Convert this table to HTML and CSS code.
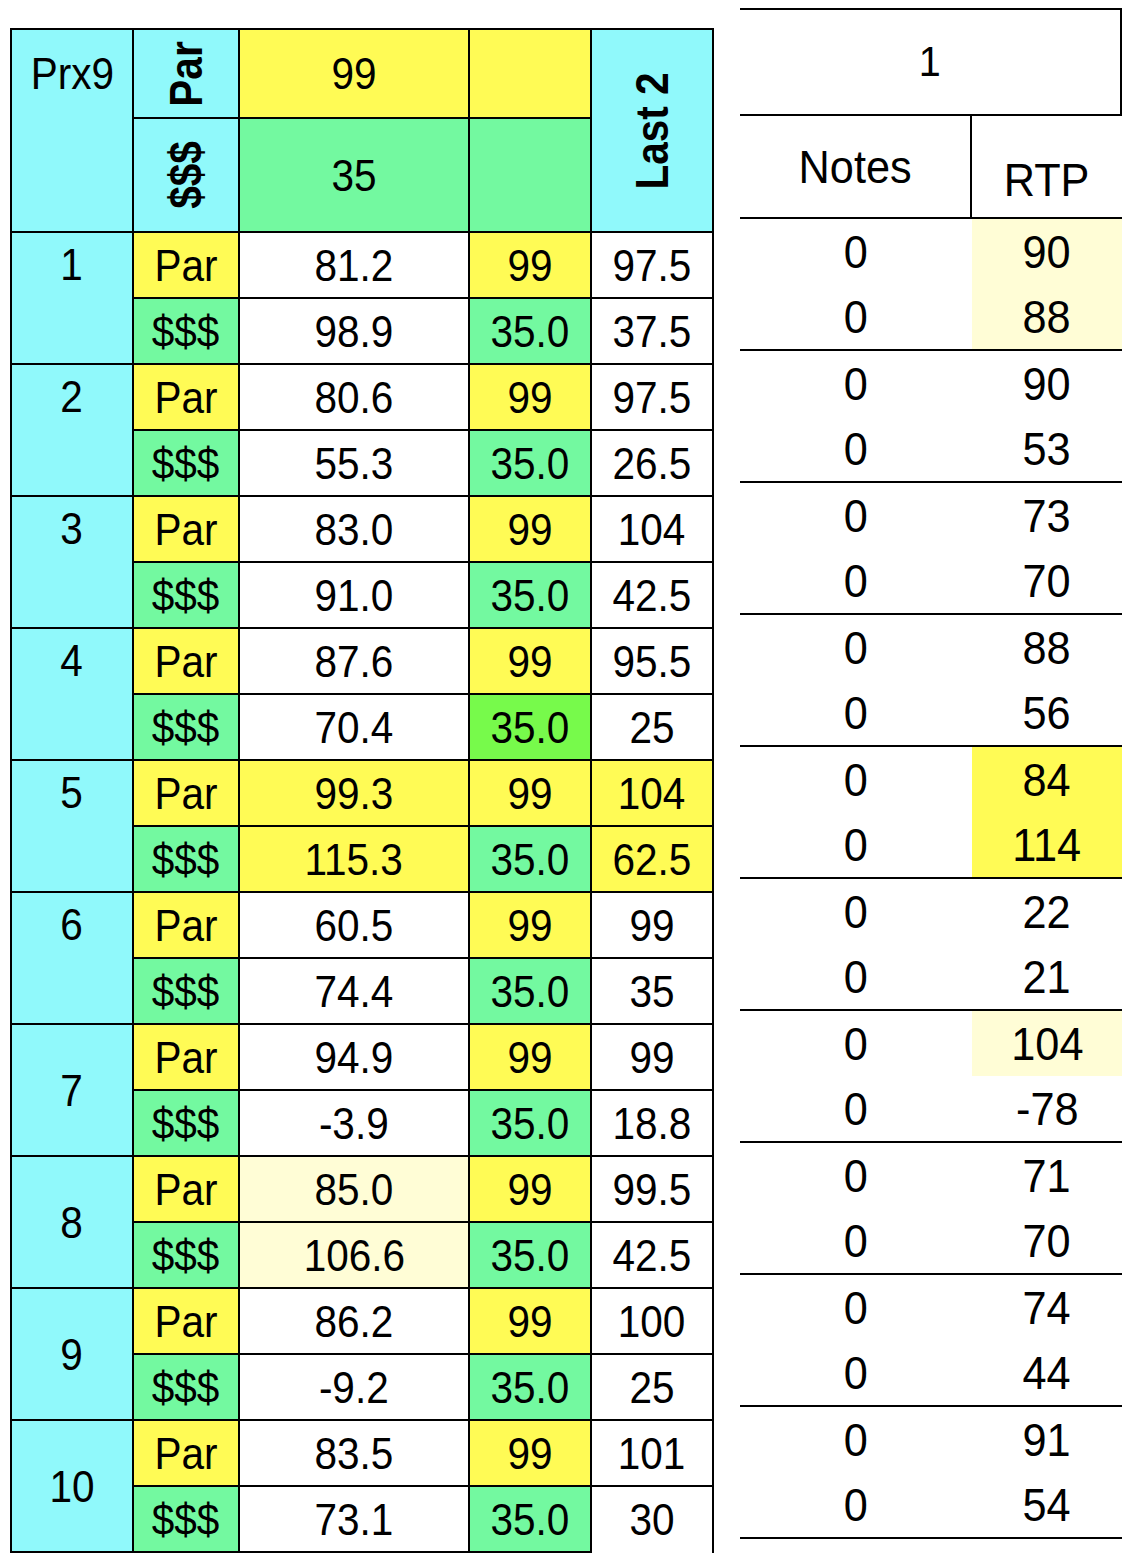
FILE: index.html
```html
<!DOCTYPE html>
<html>
<head>
<meta charset="utf-8">
<link rel="stylesheet" href="styles.css">
</head>
<body>
<div class="page">
  <div class="sheet">
    <div class="c cy top prx"><span class="t">Prx9</span></div>
    <div class="c cy"><span class="r">Par</span></div>
    <div class="c ye"><span class="t">99</span></div>
    <div class="c ye"></div>
    <div class="c cy last"><span class="r">Last 2</span></div>
    <div class="c cy"><span class="r">$$$</span></div>
    <div class="c gr"><span class="t">35</span></div>
    <div class="c gr"></div>

    <div class="c cy grp top"><span class="t">1</span></div>
    <div class="c ye"><span class="t">Par</span></div><div class="c"><span class="t">81.2</span></div><div class="c ye"><span class="t">99</span></div><div class="c"><span class="t">97.5</span></div>
    <div class="c gr"><span class="t">$$$</span></div><div class="c"><span class="t">98.9</span></div><div class="c gr"><span class="t">35.0</span></div><div class="c"><span class="t">37.5</span></div>

    <div class="c cy grp top"><span class="t">2</span></div>
    <div class="c ye"><span class="t">Par</span></div><div class="c"><span class="t">80.6</span></div><div class="c ye"><span class="t">99</span></div><div class="c"><span class="t">97.5</span></div>
    <div class="c gr"><span class="t">$$$</span></div><div class="c"><span class="t">55.3</span></div><div class="c gr"><span class="t">35.0</span></div><div class="c"><span class="t">26.5</span></div>

    <div class="c cy grp top"><span class="t">3</span></div>
    <div class="c ye"><span class="t">Par</span></div><div class="c"><span class="t">83.0</span></div><div class="c ye"><span class="t">99</span></div><div class="c"><span class="t">104</span></div>
    <div class="c gr"><span class="t">$$$</span></div><div class="c"><span class="t">91.0</span></div><div class="c gr"><span class="t">35.0</span></div><div class="c"><span class="t">42.5</span></div>

    <div class="c cy grp top"><span class="t">4</span></div>
    <div class="c ye"><span class="t">Par</span></div><div class="c"><span class="t">87.6</span></div><div class="c ye"><span class="t">99</span></div><div class="c"><span class="t">95.5</span></div>
    <div class="c gr"><span class="t">$$$</span></div><div class="c"><span class="t">70.4</span></div><div class="c lime"><span class="t">35.0</span></div><div class="c"><span class="t">25</span></div>

    <div class="c cy grp top"><span class="t">5</span></div>
    <div class="c ye"><span class="t">Par</span></div><div class="c ye"><span class="t">99.3</span></div><div class="c ye"><span class="t">99</span></div><div class="c ye"><span class="t">104</span></div>
    <div class="c gr"><span class="t">$$$</span></div><div class="c ye"><span class="t">115.3</span></div><div class="c gr"><span class="t">35.0</span></div><div class="c ye"><span class="t">62.5</span></div>

    <div class="c cy grp top"><span class="t">6</span></div>
    <div class="c ye"><span class="t">Par</span></div><div class="c"><span class="t">60.5</span></div><div class="c ye"><span class="t">99</span></div><div class="c"><span class="t">99</span></div>
    <div class="c gr"><span class="t">$$$</span></div><div class="c"><span class="t">74.4</span></div><div class="c gr"><span class="t">35.0</span></div><div class="c"><span class="t">35</span></div>

    <div class="c cy grp"><span class="t">7</span></div>
    <div class="c ye"><span class="t">Par</span></div><div class="c"><span class="t">94.9</span></div><div class="c ye"><span class="t">99</span></div><div class="c"><span class="t">99</span></div>
    <div class="c gr"><span class="t">$$$</span></div><div class="c"><span class="t">-3.9</span></div><div class="c gr"><span class="t">35.0</span></div><div class="c"><span class="t">18.8</span></div>

    <div class="c cy grp"><span class="t">8</span></div>
    <div class="c ye"><span class="t">Par</span></div><div class="c pale"><span class="t">85.0</span></div><div class="c ye"><span class="t">99</span></div><div class="c"><span class="t">99.5</span></div>
    <div class="c gr"><span class="t">$$$</span></div><div class="c pale"><span class="t">106.6</span></div><div class="c gr"><span class="t">35.0</span></div><div class="c"><span class="t">42.5</span></div>

    <div class="c cy grp"><span class="t">9</span></div>
    <div class="c ye"><span class="t">Par</span></div><div class="c"><span class="t">86.2</span></div><div class="c ye"><span class="t">99</span></div><div class="c"><span class="t">100</span></div>
    <div class="c gr"><span class="t">$$$</span></div><div class="c"><span class="t">-9.2</span></div><div class="c gr"><span class="t">35.0</span></div><div class="c"><span class="t">25</span></div>

    <div class="c cy grp"><span class="t">10</span></div>
    <div class="c ye"><span class="t">Par</span></div><div class="c"><span class="t">83.5</span></div><div class="c ye"><span class="t">99</span></div><div class="c"><span class="t">101</span></div>
    <div class="c gr"><span class="t">$$$</span></div><div class="c"><span class="t">73.1</span></div><div class="c gr"><span class="t">35.0</span></div><div class="c endcell"><span class="t">30</span></div>
  </div>

  <div class="side">
    <div class="stop"><span class="t">1</span></div>
    <div class="shead">
      <div class="notes"><span class="t">Notes</span></div>
      <div class="rtp"><span class="t">RTP</span></div>
    </div>
    <div class="sgrp">
      <div class="s"><span class="t">0</span></div><div class="s pale"><span class="t">90</span></div>
      <div class="s"><span class="t">0</span></div><div class="s pale"><span class="t">88</span></div>
    </div>
    <div class="sgrp">
      <div class="s"><span class="t">0</span></div><div class="s"><span class="t">90</span></div>
      <div class="s"><span class="t">0</span></div><div class="s"><span class="t">53</span></div>
    </div>
    <div class="sgrp">
      <div class="s"><span class="t">0</span></div><div class="s"><span class="t">73</span></div>
      <div class="s"><span class="t">0</span></div><div class="s"><span class="t">70</span></div>
    </div>
    <div class="sgrp">
      <div class="s"><span class="t">0</span></div><div class="s"><span class="t">88</span></div>
      <div class="s"><span class="t">0</span></div><div class="s"><span class="t">56</span></div>
    </div>
    <div class="sgrp">
      <div class="s"><span class="t">0</span></div><div class="s ye"><span class="t">84</span></div>
      <div class="s"><span class="t">0</span></div><div class="s ye"><span class="t">114</span></div>
    </div>
    <div class="sgrp">
      <div class="s"><span class="t">0</span></div><div class="s"><span class="t">22</span></div>
      <div class="s"><span class="t">0</span></div><div class="s"><span class="t">21</span></div>
    </div>
    <div class="sgrp">
      <div class="s"><span class="t">0</span></div><div class="s pale"><span class="t">104</span></div>
      <div class="s"><span class="t">0</span></div><div class="s"><span class="t">-78</span></div>
    </div>
    <div class="sgrp">
      <div class="s"><span class="t">0</span></div><div class="s"><span class="t">71</span></div>
      <div class="s"><span class="t">0</span></div><div class="s"><span class="t">70</span></div>
    </div>
    <div class="sgrp">
      <div class="s"><span class="t">0</span></div><div class="s"><span class="t">74</span></div>
      <div class="s"><span class="t">0</span></div><div class="s"><span class="t">44</span></div>
    </div>
    <div class="sgrp">
      <div class="s"><span class="t">0</span></div><div class="s"><span class="t">91</span></div>
      <div class="s"><span class="t">0</span></div><div class="s"><span class="t">54</span></div>
    </div>
  </div>
</div>
</body>
</html>
```

FILE: styles.css
```css
html, body {
  margin: 0;
  padding: 0;
  background: #ffffff;
}
body {
  font-family: "Liberation Sans", Arial, sans-serif;
  color: #000;
}
.page {
  display: flex;
  align-items: flex-start;
  gap: 26px;
  padding-left: 10px;
}
.sheet {
  margin-top: 28px;
  display: grid;
  grid-template-columns: 120px 104px 228px 120px 120px;
  grid-template-rows: 87px 112px repeat(20, 64px);
  gap: 2px;
  padding: 2px;
  background: #000;
  font-size: 45px;
}
.c {
  background: #fff;
  display: flex;
  align-items: center;
  justify-content: center;
  overflow: visible;
}
.c.top {
  align-items: flex-start;
}
.c.top > .t {
  height: 64px;
  line-height: 64px;
}
.c.prx > .t {
  height: 87px;
  line-height: 87px;
}
.grp, .prx, .last {
  grid-row: span 2;
}
.t {
  display: inline-block;
  white-space: nowrap;
  transform: scaleX(0.9);
  line-height: 1;
}
.r {
  display: inline-block;
  white-space: nowrap;
  font-weight: bold;
  font-size: 46px;
  line-height: 1;
  transform: rotate(-90deg) scaleX(0.88);
}
.cy { background: #90f9fb; }
.ye { background: #fffb55; }
.gr { background: #73f9a0; }
.lime { background: #77fa4b; }
.pale { background: #fffdd6; }
.endcell {
  box-shadow: 0 2px 0 #fff;
}

.side {
  margin-top: 8px;
  width: 382px;
  font-size: 46px;
}
.side .t {
  transform: scaleX(0.94);
}
.stop {
  height: 104px;
  border-top: 2px solid #000;
  border-right: 2px solid #000;
  border-bottom: 2px solid #000;
  display: flex;
  align-items: center;
  justify-content: center;
  font-size: 42px;
}
.shead {
  display: grid;
  grid-template-columns: 232px 150px;
  height: 101px;
  border-bottom: 2px solid #000;
}
.notes {
  border-right: 2px solid #000;
  display: flex;
  align-items: center;
  justify-content: center;
}
.rtp {
  display: flex;
  align-items: flex-end;
  justify-content: center;
  padding-bottom: 14px;
}
.sgrp {
  display: grid;
  grid-template-columns: 232px 150px;
  grid-auto-rows: 65px;
  border-bottom: 2px solid #000;
}
.s {
  display: flex;
  align-items: center;
  justify-content: center;
}
.s.ye { background: #fffb55; }
.s.pale { background: #fffdd6; }
```
